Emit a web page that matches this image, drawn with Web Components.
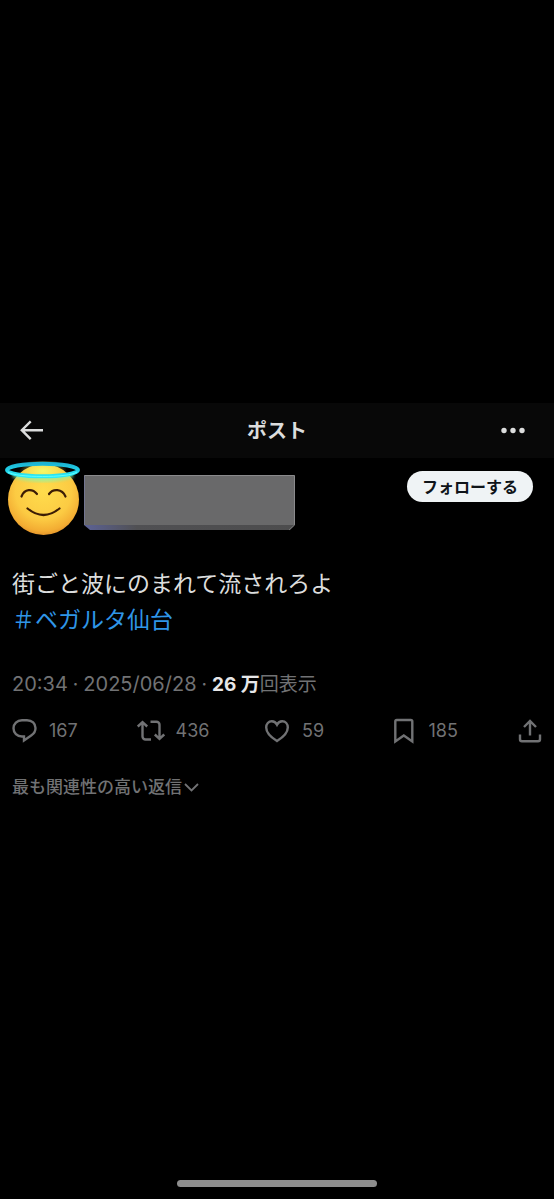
<!DOCTYPE html>
<html lang="ja">
<head>
<meta charset="utf-8">
<meta name="viewport" content="width=device-width, initial-scale=1">
<title>ポスト</title>
<style>
  body { margin: 0; background: #000; color: #dcdddd; font-family: Inter, "Noto Sans CJK JP", sans-serif; }
</style>
</head>
<body>
<post-screen>
  <screen-header>ポスト</screen-header>
  <post-view></post-view>
</post-screen>

<script>
const define = (name, html) => {
  const template = document.createElement('template');
  template.innerHTML = html;
  customElements.define(name, class extends HTMLElement {
    constructor() {
      super();
      this.attachShadow({ mode: 'open' }).append(template.content.cloneNode(true));
    }
  });
};

define('post-screen', `
<style>
  :host { display: flex; flex-direction: column; justify-content: center; min-height: 100vh; position: relative; background: #000; }
  .home { position: absolute; bottom: 12px; left: 0; right: 0; width: 36%; height: 7px; margin: 0 auto; border-radius: 4px; background: #8e8e8e; }
</style>
<slot></slot>
<div class="home"></div>`);

define('screen-header', `
<style>
  :host { display: grid; grid-template-columns: 1fr auto 1fr; align-items: center; height: 55px; padding: 0 18px; background: #080808; }
  h1 { margin: 0; font-size: 20px; line-height: 30px; font-weight: 700; }
  button { display: block; padding: 0; border: 0; background: none; color: inherit; }
  .more { justify-self: end; }
  svg { display: block; }
</style>
<button aria-label="戻る"><svg width="28" height="28" viewBox="0 0 28 28" fill="none" stroke="currentColor" stroke-width="2.400"><path d="M12.700 4.300 3.800 13.200l8.900 8.900M3.800 13.200H25"/></svg></button>
<h1><slot></slot></h1>
<button class="more" aria-label="その他"><svg width="36" height="28" viewBox="0 0 36 28" fill="currentColor"><circle cx="4" cy="13.500" r="2.700"/><circle cx="13" cy="13.500" r="2.700"/><circle cx="22" cy="13.500" r="2.700"/></svg></button>`);

define('angel-avatar', `
<style>:host { display: block; } svg { display: block; }</style>
<svg width="76" height="75" viewBox="0 0 76 75" role="img" aria-label="天使の笑顔">
  <defs>
    <radialGradient id="face" cx=".5" cy=".38" r=".66"><stop offset="0" stop-color="#ffdc4c"/><stop offset=".6" stop-color="#fccb43"/><stop offset=".85" stop-color="#f3ad33"/><stop offset="1" stop-color="#dc8726"/></radialGradient>
    <radialGradient id="shine"><stop offset="0" stop-color="#f3f968"/><stop offset="1" stop-color="#f3f968" stop-opacity="0"/></radialGradient>
    <linearGradient id="ring" x2="0" y2="1"><stop offset="0" stop-color="#1cb4d2"/><stop offset=".4" stop-color="#20cbe4"/><stop offset="1" stop-color="#2beaf6"/></linearGradient>
    <filter id="soft" x="-20%" y="-60%" width="140%" height="220%"><feGaussianBlur stdDeviation="1.500"/></filter>
  </defs>
  <circle cx="38.500" cy="38.500" r="35.500" fill="url(#face)"/>
  <ellipse cx="38" cy="10" rx="24" ry="12" fill="url(#shine)"/>
  <path d="M8 14q30 9 60 0" fill="none" stroke="#91f0a0" stroke-width="5" opacity=".7" filter="url(#soft)"/>
  <ellipse cx="37.500" cy="9" rx="35.500" ry="6.300" fill="none" stroke="url(#ring)" stroke-width="4"/>
  <path d="M3 11c8 6 61 6 69 0" fill="none" stroke="#5cffff" stroke-width="1"/>
  <path d="M16.500 35.500c3-8 11-8 15.500-2.500M44 33c4-5.500 13-5.500 16.500 2.500" fill="none" stroke="#3c1c05" stroke-width="2.200" stroke-linecap="round"/>
  <path d="M22.500 47.500q16 13 32 0" fill="none" stroke="#3c1c05" stroke-width="2.200" stroke-linecap="round"/>
</svg>`);

define('name-cover', `
<style>
  :host { display: block; height: 56px; }
  svg { display: block; width: 100%; height: 100%; }
</style>
<svg viewBox="0 0 211 56" preserveAspectRatio="none" aria-hidden="true">
  <defs>
    <linearGradient id="edge"><stop offset="0" stop-color="#5c6296"/><stop offset=".25" stop-color="#505053"/><stop offset="1" stop-color="#4c4c4d"/></linearGradient>
  </defs>
  <path d="M1 0h209l1 1v49l-5 5H6l-6-5V1z" fill="url(#edge)"/>
  <path d="M1 1h209v49H1z" fill="#69696a"/>
  <path d="M0 50V1L1 .5h209.500V50" fill="none" stroke="#8a8a8c"/>
  <path d="m205 55 5.500-5" stroke="#777"/>
</svg>`);

define('post-author', `
<style>
  :host { display: flex; align-items: flex-start; padding: 3px 21px 0 5px; }
  name-cover { flex: 0 1 211px; margin: 14px auto 0 3px; }
  button { height: 31px; padding: 0 15px; border: 0; border-radius: 16px; background: #eff3f5; color: #0f1419; font: 700 16px/24px Inter, "Noto Sans CJK JP", sans-serif; white-space: nowrap; margin-top: 10px; }
</style>
<angel-avatar></angel-avatar>
<name-cover></name-cover>
<button>フォローする</button>`);

define('post-actions', `
<style>
  :host { display: grid; grid-template-columns: repeat(4, 1fr) auto; padding: 0 10px; color: #717274; }
  button { display: flex; align-items: center; gap: 11px; padding: 0; border: 0; background: none; color: inherit; font: 400 18px/28px Inter, sans-serif; }
  svg { display: block; width: 28px; height: 28px; fill: none; stroke: currentColor; stroke-width: 2.400; }
</style>
<button aria-label="返信 167"><svg viewBox="0 0 28 28"><path d="M12 3.200h5c5 0 8.500 3.400 8.500 7.900 0 3-1.500 5.600-4 7.200L14 23.500v-4h-2c-5 0-8.500-3.600-8.500-8.200S7 3.200 12 3.200z"/></svg>167</button>
<button aria-label="リポスト 436"><svg viewBox="0 0 28 28"><path d="m.800 9.500 4.700-4.400 4.700 4.400M5.500 6v13.500a3 3 0 0 0 3 3H14M13.500 4.700h6a3 3 0 0 1 3 3v14M17.800 17.500l4.700 4.400 4.700-4.400"/></svg>436</button>
<button aria-label="いいね 59"><svg viewBox="0 0 28 28"><path d="M14 24C7.500 20 3.200 15.700 3.200 10.500c0-3.600 2.400-6.200 5.600-6.200 2.400 0 4.100 1.300 5.200 3.400 1.100-2.100 2.800-3.400 5.200-3.400 3.200 0 5.600 2.600 5.600 6.200C24.800 15.700 20.500 20 14 24z"/></svg>59</button>
<button aria-label="ブックマーク 185"><svg viewBox="0 0 28 28"><path d="M5.300 4.500a1.500 1.500 0 0 1 1.500-1.500h14a1.500 1.500 0 0 1 1.500 1.500v20L13.800 18.500 5.300 24.500z"/></svg>185</button>
<button aria-label="共有"><svg viewBox="0 0 28 28"><path d="M14 18.500V4.500M8 10l6-6 6 6M4 17.500v4.700a2 2 0 0 0 2 2h16a2 2 0 0 0 2-2v-4.700"/></svg></button>`);

define('post-view', `
<style>
  :host { display: block; }
  .text { margin: 30px 12px 0; font-size: 23px; line-height: 36px; }
  .text p { margin: 0; }
  a { color: #2f96e8; text-decoration: none; }
  .meta { margin: 32px 12px 17px; color: #717274; font-size: 19px; line-height: 30px; }
  .meta time { font-size: 20px; line-height: 20px; }
  .meta i { margin: 0 5px; font-style: normal; }
  .meta b { color: #e7e7e8; font-weight: 700; }
  .sort { display: flex; align-items: center; gap: 2px; margin: 33px 12px 0; padding: 0; border: 0; background: none; color: #717274; font: 500 17px/18px Inter, "Noto Sans CJK JP", sans-serif; }
  .sort svg { display: block; }
</style>
<article>
  <post-author></post-author>
  <div class="text">
    <p>街ごと波にのまれて流されろよ</p>
    <p><a href="#tag">＃ベガルタ仙台</a></p>
  </div>
  <p class="meta"><time>20:34</time><i>·</i><time>2025/06/28</time><i>·</i><b>26 万</b>回表示</p>
  <post-actions></post-actions>
</article>
<button class="sort">最も関連性の高い返信<svg width="16" height="16" viewBox="0 0 16 16" fill="none" stroke="currentColor" stroke-width="1.800"><path d="m1 5 6.500 6.500L14 5"/></svg></button>`);
</script>
</body>
</html>
